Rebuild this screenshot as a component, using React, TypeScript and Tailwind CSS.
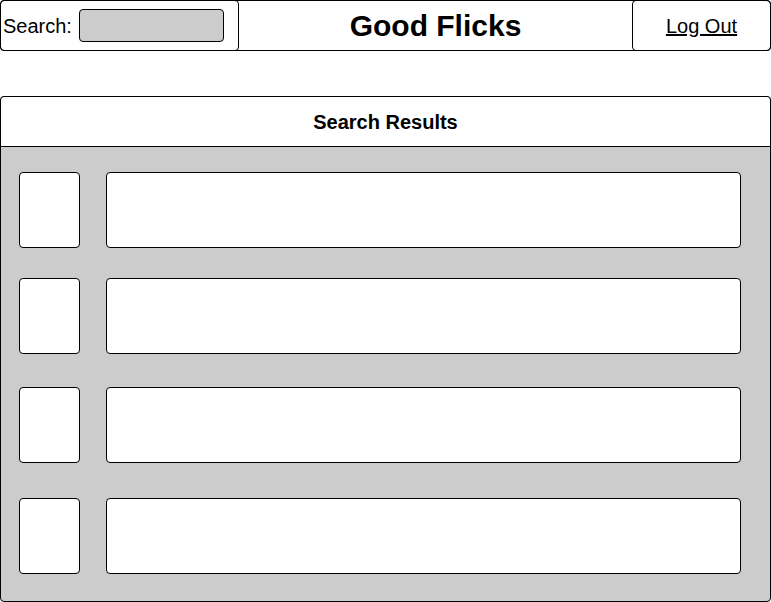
export default function App() {
  const rows = ["mt-0", "mt-[30px]", "mt-[33px]", "mt-[35px]"];

  return (
    <div
      className="w-[771px] h-[602px] bg-white text-black"
      style={{ fontFamily: '"Liberation Sans", Arial, sans-serif' }}
    >
      {/* Top bar */}
      <header className="flex h-[51px] w-[771px] rounded-[4px] border border-black">
        <div className="-m-px flex h-[51px] w-[239px] items-center rounded-[4px] border border-black pl-[2px]">
          <span className="text-[20px]">Search:</span>
          <input className="ml-[7px] h-[33px] w-[145px] rounded-[4px] border border-black bg-[#cccccc]" />
        </div>
        <div className="flex flex-1 items-center justify-center">
          <h1 className="text-[30px] font-bold">Good Flicks</h1>
        </div>
        <div className="-m-px flex h-[51px] w-[139px] items-center justify-center rounded-[4px] border border-black">
          <a href="#" className="text-[20px] underline">
            Log Out
          </a>
        </div>
      </header>

      {/* Results panel */}
      <section className="mt-[45px] h-[506px] w-[771px] rounded-[4px] border border-black bg-[#cccccc]">
        <div className="-m-px flex h-[51px] w-[771px] items-center justify-center rounded-t-[4px] border border-black bg-white">
          <h2 className="text-[20px] font-bold">Search Results</h2>
        </div>
        <div className="flex flex-col pl-[18px] pr-[29px] pt-[26px]">
          {rows.map((m, i) => (
            <div key={i} className={`flex ${m}`}>
              <div className="h-[76px] w-[61px] rounded-[4px] border border-black bg-white" />
              <div className="ml-[26px] h-[76px] flex-1 rounded-[4px] border border-black bg-white" />
            </div>
          ))}
        </div>
      </section>
    </div>
  );
}
